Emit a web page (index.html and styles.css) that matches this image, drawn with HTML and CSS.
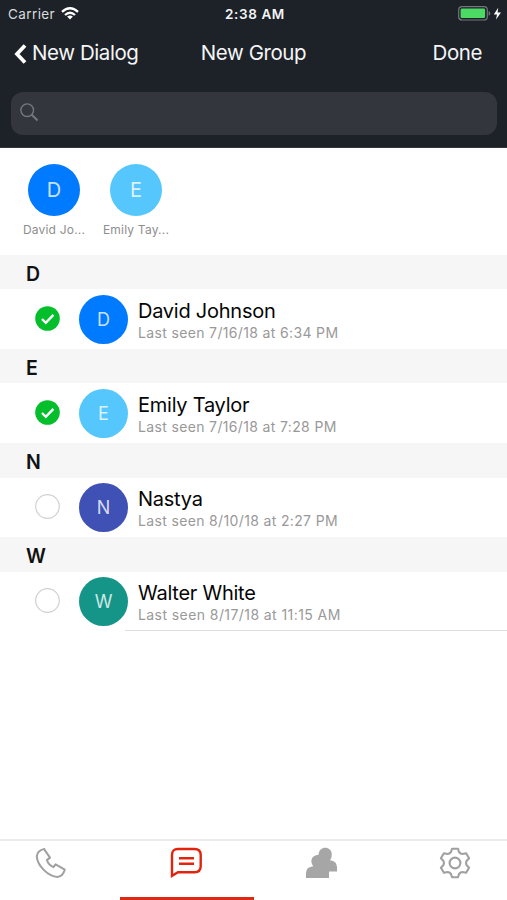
FILE: index.html
```html
<!DOCTYPE html>
<html lang="en">
<head>
<meta charset="utf-8">
<title>New Group</title>
<link rel="stylesheet" href="styles.css">
</head>
<body>
<header class="header">
  <div class="status">
    <div class="carrier"><span class="carrier-name">Carrier</span>
      <svg class="wifi" width="18" height="13" viewBox="0 0 18 13" fill="none" stroke="#fff" stroke-width="2.3"><path d="M1 4.8Q9-2.4 17 4.8M4 8Q9 3.6 14 8"/><path d="M9 12.4L6.1 9.6Q9 7.4 11.9 9.6Z" fill="#fff" stroke="none"/></svg>
    </div>
    <span class="clock">2:38 AM</span>
    <svg class="battery" width="44" height="16" viewBox="0 0 44 16"><rect x=".7" y=".7" width="28.6" height="13.3" rx="3.3" fill="none" stroke="#73777c" stroke-width="1.2"/><rect x="2.6" y="2.6" width="24.5" height="9.5" rx="1.3" fill="#4cd964"/><path d="M30.6 5q1.7.6 1.7 2.4t-1.7 2.4z" fill="#73777c"/><path d="M40.2 1.7L35.8 8.5h3.2l-1 4.9 5-7h-3.4z" fill="#fff"/></svg>
  </div>
  <nav class="nav">
    <a class="back"><svg width="13" height="20" viewBox="0 0 13 20" fill="none" stroke="#fff" stroke-width="3.8"><path d="M11 1.5L3 10l8 8.5"/></svg><span class="back-label">New Dialog</span></a>
    <h1 class="title">New Group</h1>
    <a class="done">Done</a>
  </nav>
  <div class="search">
    <svg width="19" height="19" viewBox="0 0 19 19" fill="none" stroke="#74777b"><circle cx="7.2" cy="7.2" r="6.3" stroke-width="1.4"/><path d="M11.8 11.8L17.5 17.5" stroke-width="2"/></svg>
  </div>
</header>
<section class="chosen">
  <div class="person"><div class="avatar large blue">D</div><span class="person-name">David Jo...</span></div>
  <div class="person"><div class="avatar large sky">E</div><span class="person-name">Emily Tay...</span></div>
</section>
<main class="contacts">
  <h2 class="letter">D</h2>
  <div class="row">
    <svg class="check" viewBox="0 0 25 25"><circle cx="12.5" cy="12.5" r="12.3" fill="#04be2c"/><path d="M7 13l3.8 3.8 7.6-8" fill="none" stroke="#fff" stroke-width="2.4"/></svg>
    <div class="avatar blue">D</div>
    <div class="info"><span class="name">David Johnson</span><span class="seen">Last seen 7/16/18 at 6:34 PM</span></div>
  </div>
  <h2 class="letter">E</h2>
  <div class="row">
    <svg class="check" viewBox="0 0 25 25"><circle cx="12.5" cy="12.5" r="12.3" fill="#04be2c"/><path d="M7 13l3.8 3.8 7.6-8" fill="none" stroke="#fff" stroke-width="2.4"/></svg>
    <div class="avatar sky">E</div>
    <div class="info"><span class="name">Emily Taylor</span><span class="seen">Last seen 7/16/18 at 7:28 PM</span></div>
  </div>
  <h2 class="letter">N</h2>
  <div class="row">
    <svg class="check" viewBox="0 0 25 25"><circle cx="12.5" cy="12.5" r="11.8" fill="#fff" stroke="#d0d0d2" stroke-width="1.2"/></svg>
    <div class="avatar indigo">N</div>
    <div class="info"><span class="name">Nastya</span><span class="seen">Last seen 8/10/18 at 2:27 PM</span></div>
  </div>
  <h2 class="letter">W</h2>
  <div class="row last">
    <svg class="check" viewBox="0 0 25 25"><circle cx="12.5" cy="12.5" r="11.8" fill="#fff" stroke="#d0d0d2" stroke-width="1.2"/></svg>
    <div class="avatar teal">W</div>
    <div class="info"><span class="name">Walter White</span><span class="seen seen-wide">Last seen 8/17/18 at 11:15 AM</span></div>
  </div>
</main>
<footer class="tabs">
  <a class="tab"><svg width="32" height="32" viewBox="0 0 32 32" fill="none" stroke="#a0a0a0" stroke-width="2" stroke-linejoin="round"><path d="M9.4 2.7L15 10.6L11.9 13.1Q13.2 17.7 18.4 20.2L20.6 17.3L29.8 22.6Q28 29.5 22.6 29.9C12.8 29.4 2.4 18.6 1.8 9.4Q2.2 3.6 9.4 1.9Z"/></svg></a>
  <a class="tab active"><svg width="32" height="32" viewBox="0 0 32 32" fill="none" stroke="#e2230e" stroke-width="2.4"><path d="M2 28.8V8Q2 2 8 2H24.5Q30.7 2 30.7 8V19.3Q30.7 25.3 24.5 25.3H8Z"/><path d="M9 11.3H24M9 16.8H24"/></svg></a>
  <a class="tab"><svg width="32" height="32" viewBox="0 0 32 32" fill="#a6a6a6"><path d="M1 31V26Q1 20 8.3 19.2Q5.9 16.5 6.5 12.8Q7.6 8.1 13.6 7.7C13.8-1.7 26.8-1.5 26.8 7.5Q26.8 10.7 25 13.2Q32 14.2 32 20V24.6H24V31Z"/></svg></a>
  <a class="tab"><svg width="32" height="32" viewBox="-16 -16 32 32" fill="none" stroke="#a0a0a0" stroke-width="2.1" stroke-linejoin="round"><path d="M-3-14.3H3L4-11Q5.5-9 7.5-9L11.1-9.8 14.1-4.7 11.5-2Q10.6 0 11.5 2L14.1 4.7 11.1 9.8 7.5 9Q5.5 9 4 11L3 14.3H-3L-4 11Q-5.5 9-7.5 9L-11.1 9.8-14.1 4.7-11.5 2Q-10.6 0-11.5-2L-14.1-4.7-11.1-9.8-7.5-9Q-5.5-9-4-11Z"/><circle r="5.4"/></svg></a>
</footer>
</body>
</html>
```
FILE: styles.css
```css
* { box-sizing: border-box; }
body {
  margin: 0;
  height: 900px;
  display: flex;
  flex-direction: column;
  overflow: hidden;
  background: #fff;
  color: #111;
  font-family: Inter, "Liberation Sans", sans-serif;
}
svg { display: block; flex: none; }
h1, h2 { margin: 0; }
.header {
  height: 147.5px;
  flex: none;
  background: #1d2128;
  color: #f4f5f6;
  border-bottom: 1px solid #34373b;
}
.status {
  height: 28px;
  padding: 0 5px 0 8px;
  display: grid;
  grid-template-columns: 1fr auto 1fr;
  align-items: center;
  font-size: 13.5px;
}
.carrier { display: flex; align-items: center; gap: 6px; color: #d9dbdd; }
.carrier-name { letter-spacing: 0.4px; }
.wifi { margin-top: -1px; }
.clock { font-weight: 600; font-size: 13.5px; letter-spacing: 0.6px; }
.battery { justify-self: end; margin-top: -1px; }
.nav {
  height: 49px;
  padding: 0 14px;
  display: grid;
  grid-template-columns: 1fr auto 1fr;
  align-items: center;
  font-size: 20.5px;
  letter-spacing: -0.42px;
}
.back { display: flex; align-items: center; gap: 5px; }
.back svg { margin-top: 3px; }
.title { font-size: 20.5px; font-weight: 400; }
.done { justify-self: end; margin-right: 11px; }
.search {
  margin: 14.5px 10px 0 11px;
  height: 43.5px;
  border-radius: 12px;
  background: #33373d;
  display: flex;
  align-items: center;
  padding-left: 9px;
}
.search svg { margin-top: -2px; }
.chosen {
  height: 107.5px;
  flex: none;
  display: flex;
  padding: 16px 0 0 13px;
}
.person { width: 82px; display: flex; flex-direction: column; align-items: center; }
.person-name { margin-top: 6px; font-size: 12px; line-height: 16px; color: #8e8e8e; letter-spacing: 0.2px; white-space: nowrap; }
.avatar {
  width: 49px;
  height: 49px;
  flex: none;
  border-radius: 50%;
  display: flex;
  align-items: center;
  justify-content: center;
  padding-top: 1px;
  font-size: 18px;
  font-weight: 400;
  color: rgba(255, 255, 255, 0.8);
}
.large { width: 52.5px; height: 52.5px; font-size: 20px; }
.blue { background: #007aff; }
.sky { background: #55c7fc; }
.indigo { background: #3f51b5; }
.teal { background: #159588; }
.letter {
  height: 34.4px;
  padding: 1.5px 0 0 26px;
  background: #f6f6f6;
  font-size: 19.5px;
  line-height: 34px;
  font-weight: 600;
}
.row { height: 59.7px; display: flex; align-items: center; padding-left: 35px; }
.check { width: 25px; height: 25px; margin: -1px 19px 0 0; }
.info { display: flex; flex-direction: column; margin: 3px 0 0 10px; white-space: nowrap; }
.name { font-size: 20px; line-height: 24px; color: #050505; letter-spacing: -0.25px; }
.seen { font-size: 14px; line-height: 19px; color: #999; letter-spacing: 0.35px; }
.seen-wide { letter-spacing: 0.42px; }
.last { background: linear-gradient(#dedede, #dedede) 125px 100% / 100% 1px no-repeat; }
.tabs {
  margin-top: auto;
  height: 61px;
  flex: none;
  display: grid;
  grid-template-columns: 120px 134px 135px 1fr;
  border-top: 2px solid #ececec;
}
.tab { padding: 6px 0 0 35px; border-bottom: 3px solid transparent; }
.tab.active { padding-left: 50px; border-color: #dc2916; }
.tab:nth-child(3) { padding-left: 51px; }
.tab:nth-child(4) { padding-left: 50px; }
```
